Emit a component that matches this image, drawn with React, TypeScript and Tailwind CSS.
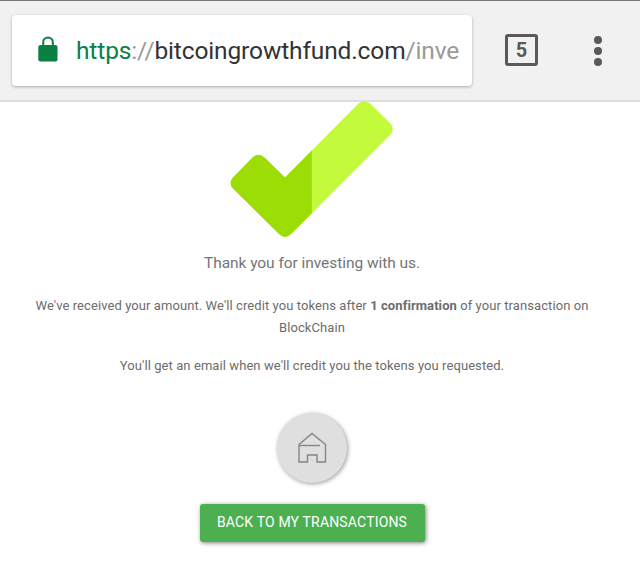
import type { ReactNode } from 'react';

const OPEN_TABS = 5;

function LockIcon() {
  return (
    <svg width="20" height="26" viewBox="0 0 20 26" className="-mt-[3px] shrink-0">
      <path d="M5.2 10V6.2a4.8 4.8 0 0 1 9.6 0V10" fill="none" stroke="#0b8043" strokeWidth="2" />
      <rect x="0.3" y="9" width="19.2" height="16.5" rx="2" fill="#0b8043" />
    </svg>
  );
}

function CheckMark() {
  return (
    <svg width="164" height="138" viewBox="230 100 164 138" className="block">
      <path
        d="M285 177.500L358.500 103.500Q364.300 98.500 370 103.500L390.500 123.500Q395 129 390.500 134.500L291 234Q285 240 279 234L233 188.500Q228 183 233 177.500L252.500 157.500Q258.500 152 264.500 157.500Z"
        fill="#c2fb3b"
      />
      <path
        d="M285 177.500L311.800 150.500V213.200L291 234Q285 240 279 234L233 188.500Q228 183 233 177.500L252.500 157.500Q258.500 152 264.500 157.500Z"
        fill="#9bdd04"
      />
    </svg>
  );
}

function HomeIcon() {
  return (
    <svg width="30" height="32" viewBox="0 0 30 32" fill="none" stroke="#858585" strokeWidth="1.4">
      <path d="M2 12.500L15 1.500L28.500 12.500V30H20V23H10.500V30H2Z" />
      <path d="M2 13.500H23" />
    </svg>
  );
}

function BrowserBar() {
  return (
    <header className="flex h-[102px] border-t border-b-2 border-t-[#777577] border-b-[#dedede] bg-[#f1f1f1] pt-[14px] pl-3">
      <div className="flex h-[71px] w-[460px] items-center rounded bg-white pr-[12px] pl-[26px] shadow-[0_1px_3px_rgba(0,0,0,0.3)]">
        <LockIcon />
        <div className="ml-[18px] flex-1 text-[24.5px] leading-8 tracking-[-0.13px] whitespace-nowrap text-[#999]">
          <span className="text-[#0b8043]">https</span>://
          <span className="text-[#333]">bitcoingrowthfund.com</span>/inve
        </div>
      </div>
      <div className="mt-[19px] ml-[33px] flex h-8 w-[33px] items-center justify-center rounded-[3px] border-[3px] border-[#595959] text-xl font-bold text-[#595959]">
        {OPEN_TABS}
      </div>
      <div className="mt-[21px] ml-[56px] flex flex-col gap-[3px]">
        <span className="size-2 rounded-full bg-[#595959]" />
        <span className="size-2 rounded-full bg-[#595959]" />
        <span className="size-2 rounded-full bg-[#595959]" />
      </div>
    </header>
  );
}

function Message({ children }: { children: ReactNode }) {
  return <p className="mb-4 text-[13px] leading-[22px] tracking-[0.08px] text-[#6c6c6c]">{children}</p>;
}

export default function App() {
  return (
    <div className="h-[569px] overflow-hidden bg-white font-['Roboto',sans-serif]">
      <BrowserBar />
      <main className="-mt-[2px] flex w-[624px] flex-col items-center text-center">
        <CheckMark />
        <h1 className="mt-[13px] mb-5 text-[15.5px] leading-6 tracking-[-0.05px] text-[#757575]">
          Thank you for investing with us.
        </h1>
        <Message>
          We've received your amount. We'll credit you tokens after <b>1 confirmation</b> of your transaction on
          <br />
          BlockChain
        </Message>
        <Message>You'll get an email when we'll credit you the tokens you requested.</Message>
        <button className="mt-5 flex size-[70px] items-center justify-center rounded-full bg-[#dfdfdf] shadow-[1px_1px_4px_rgba(0,0,0,0.4)]">
          <HomeIcon />
        </button>
        <button className="mt-[21px] h-[38px] w-[225px] rounded-[3px] bg-[#4caf50] pb-px text-[14px] tracking-[0.17px] text-white shadow-[1px_1px_4px_rgba(0,0,0,0.5)]">
          BACK TO MY TRANSACTIONS
        </button>
      </main>
    </div>
  );
}
